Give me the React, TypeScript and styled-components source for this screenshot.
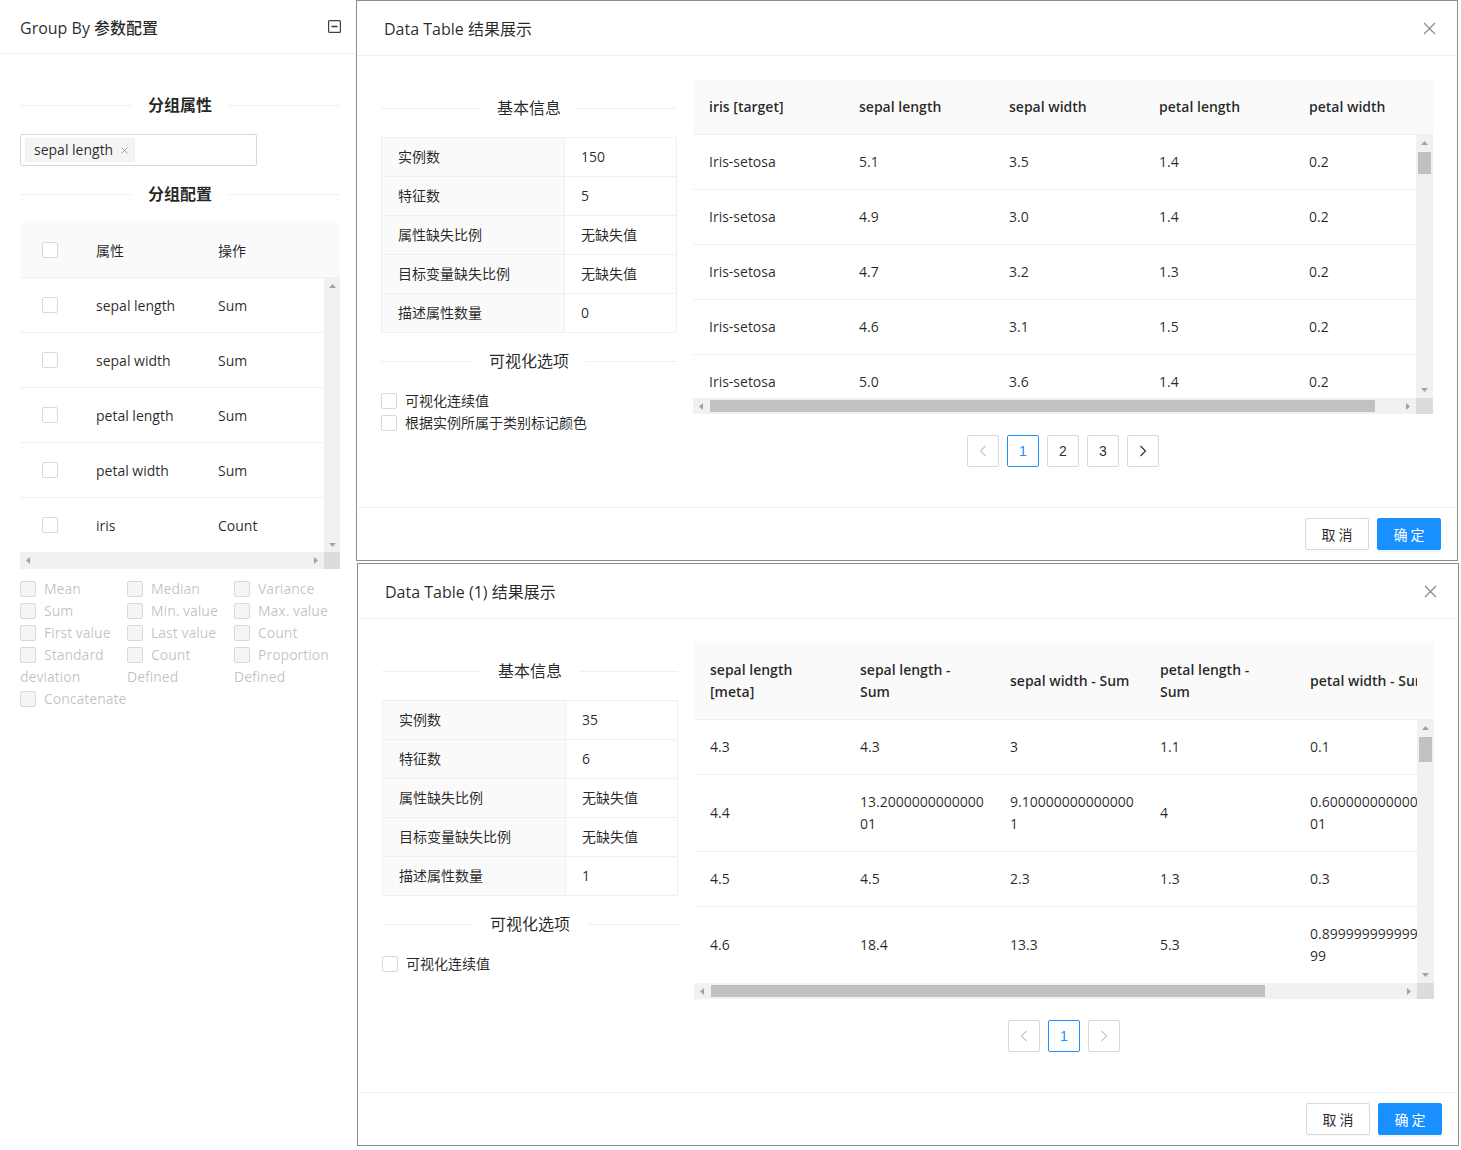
import React from 'react';
import styled, { createGlobalStyle } from 'styled-components';

type ArrowDir = 'up' | 'down' | 'left' | 'right';

const leftColumns = ['sepal length', 'sepal width', 'petal length', 'petal width', 'iris'];
const leftOps = ['Sum', 'Sum', 'Sum', 'Sum', 'Count'];

const aggOptions = [
  'Mean',
  'Median',
  'Variance',
  'Sum',
  'Min. value',
  'Max. value',
  'First value',
  'Last value',
  'Count',
  'Standard deviation',
  'Count Defined',
  'Proportion Defined',
  'Concatenate',
];

const firstResult = {
  title: 'Data Table 结果展示',
  info: [
    ['实例数', '150'],
    ['特征数', '5'],
    ['属性缺失比例', '无缺失值'],
    ['目标变量缺失比例', '无缺失值'],
    ['描述属性数量', '0'],
  ],
  visOptions: ['可视化连续值', '根据实例所属于类别标记颜色'],
  columns: ['iris [target]', 'sepal length', 'sepal width', 'petal length', 'petal width'],
  rows: [
    ['Iris-setosa', '5.1', '3.5', '1.4', '0.2'],
    ['Iris-setosa', '4.9', '3.0', '1.4', '0.2'],
    ['Iris-setosa', '4.7', '3.2', '1.3', '0.2'],
    ['Iris-setosa', '4.6', '3.1', '1.5', '0.2'],
    ['Iris-setosa', '5.0', '3.6', '1.4', '0.2'],
  ],
  pages: 3,
  hThumb: 96.5,
  vThumb: 22,
};

const secondResult = {
  title: 'Data Table (1) 结果展示',
  info: [
    ['实例数', '35'],
    ['特征数', '6'],
    ['属性缺失比例', '无缺失值'],
    ['目标变量缺失比例', '无缺失值'],
    ['描述属性数量', '1'],
  ],
  visOptions: ['可视化连续值'],
  columns: [
    'sepal length\n[meta]',
    'sepal length -\nSum',
    'sepal width - Sum',
    'petal length -\nSum',
    'petal width - Sum',
  ],
  rows: [
    ['4.3', '4.3', '3', '1.1', '0.1'],
    ['4.4', '13.2000000000000\n01', '9.10000000000000\n1', '4', '0.60000000000000\n01'],
    ['4.5', '4.5', '2.3', '1.3', '0.3'],
    ['4.6', '18.4', '13.3', '5.3', '0.89999999999999\n99'],
  ],
  pages: 1,
  hThumb: 80.4,
  vThumb: 25,
};

const GlobalStyle = createGlobalStyle`
  html, body {
    margin: 0;
    padding: 0;
    background: #ffffff;
  }
  body {
    font-family: 'Open Sans', 'Noto Sans CJK SC', sans-serif;
    font-size: 14px;
    color: rgba(0, 0, 0, 0.85);
  }
  * {
    box-sizing: border-box;
  }
`;

const Arrow: React.FC<{ dir: ArrowDir; color?: string }> = ({ dir, color = '#a3a3a3' }) => (
  <svg width="7" height="7" viewBox="0 0 7 7">
    {dir === 'up' && <path d="M0 5 L3.5 1 L7 5 Z" fill={color} />}
    {dir === 'down' && <path d="M0 2 L3.5 6 L7 2 Z" fill={color} />}
    {dir === 'left' && <path d="M5 0 L1 3.5 L5 7 Z" fill={color} />}
    {dir === 'right' && <path d="M2 0 L6 3.5 L2 7 Z" fill={color} />}
  </svg>
);

const Chevron: React.FC<{ dir: 'left' | 'right'; color: string }> = ({ dir, color }) => (
  <svg width="8" height="12" viewBox="0 0 8 12">
    <path
      d={dir === 'left' ? 'M6.5 1 L1.5 6 L6.5 11' : 'M1.5 1 L6.5 6 L1.5 11'}
      fill="none"
      stroke={color}
      strokeWidth="1.2"
    />
  </svg>
);

const CloseIcon: React.FC = () => (
  <svg width="13" height="13" viewBox="0 0 13 13">
    <path d="M1 1 L12 12 M12 1 L1 12" stroke="#8c8c8c" strokeWidth="1.3" fill="none" />
  </svg>
);

const CollapseIcon: React.FC = () => (
  <svg width="13" height="13" viewBox="0 0 13 13">
    <rect x="0.6" y="0.6" width="11.8" height="11.8" rx="1" fill="none" stroke="#404040" strokeWidth="1.2" />
    <path d="M3.5 6.5 H9.5" stroke="#404040" strokeWidth="1.6" />
  </svg>
);

const TagClose: React.FC = () => (
  <svg width="7" height="7" viewBox="0 0 7 7">
    <path d="M0.5 0.5 L6.5 6.5 M6.5 0.5 L0.5 6.5" stroke="#9a9a9a" strokeWidth="1" fill="none" />
  </svg>
);

const VScrollBar: React.FC<{ width: number; thumb?: number }> = ({ width, thumb }) => (
  <VTrack $w={width}>
    <ArrowBox $size={width}>
      <Arrow dir="up" />
    </ArrowBox>
    {thumb ? <VThumb $h={thumb} /> : null}
    <Spacer />
    <ArrowBox $size={width}>
      <Arrow dir="down" />
    </ArrowBox>
  </VTrack>
);

const HScrollBar: React.FC<{ height: number; corner: number; thumb?: number }> = ({
  height,
  corner,
  thumb,
}) => (
  <HBar $h={height}>
    <HTrack>
      <ArrowBox $size={17}>
        <Arrow dir="left" />
      </ArrowBox>
      <ThumbLane>{thumb ? <HThumb style={{ width: `${thumb}%` }} /> : null}</ThumbLane>
      <ArrowBox $size={17}>
        <Arrow dir="right" />
      </ArrowBox>
    </HTrack>
    <Corner $w={corner} />
  </HBar>
);

const Divider: React.FC<{ bold?: boolean; children: React.ReactNode }> = ({ bold, children }) => (
  <DividerLine $bold={bold}>
    <DividerText>{children}</DividerText>
  </DividerLine>
);

const GroupByPanel: React.FC = () => (
  <LeftPanel>
    <PanelHeader>
      <PanelTitle>Group By 参数配置</PanelTitle>
      <CollapseIcon />
    </PanelHeader>
    <PanelBody>
      <Divider bold>分组属性</Divider>
      <SelectBox>
        <Tag>
          sepal length
          <TagClose />
        </Tag>
      </SelectBox>
      <Divider bold>分组配置</Divider>
      <LeftHead>
        <CenterCell>
          <Box />
        </CenterCell>
        <LeftCell>属性</LeftCell>
        <LeftCell>操作</LeftCell>
      </LeftHead>
      <ScrollBody>
        <LeftRowsClip>
          {leftColumns.map((name, i) => (
            <LeftRow key={name}>
              <CenterCell>
                <Box />
              </CenterCell>
              <LeftCell>{name}</LeftCell>
              <LeftCell>{leftOps[i]}</LeftCell>
            </LeftRow>
          ))}
        </LeftRowsClip>
        <VScrollBar width={16} />
      </ScrollBody>
      <HScrollBar height={17} corner={16} />
      <OptionGrid>
        {aggOptions.map((opt) => (
          <OptionItem key={opt}>
            <Box $disabled />
            {opt}
          </OptionItem>
        ))}
      </OptionGrid>
    </PanelBody>
  </LeftPanel>
);

type ResultData = typeof firstResult;

const DataTable: React.FC<{ data: ResultData }> = ({ data }) => (
  <div>
    <HeadRow>
      <HeadClip>
        <Grid5>
          {data.columns.map((c) => (
            <HeadCell key={c}>{c}</HeadCell>
          ))}
        </Grid5>
      </HeadClip>
      <Gutter />
    </HeadRow>
    <ScrollBody>
      <RowsClip>
        {data.rows.map((row, i) => (
          <DataRow key={i}>
            {row.map((cell, j) => (
              <DataCell key={j}>{cell}</DataCell>
            ))}
          </DataRow>
        ))}
      </RowsClip>
      <VScrollBar width={17} thumb={data.vThumb} />
    </ScrollBody>
    <HScrollBar height={16} corner={17} thumb={data.hThumb} />
  </div>
);

const Pagination: React.FC<{ pages: number }> = ({ pages }) => (
  <PagerRow>
    <PageItem>
      <Chevron dir="left" color="#c8c8c8" />
    </PageItem>
    {Array.from({ length: pages }, (_, i) => (
      <PageItem key={i} $active={i === 0}>
        {i + 1}
      </PageItem>
    ))}
    <PageItem>
      <Chevron dir="right" color={pages > 1 ? '#333333' : '#c8c8c8'} />
    </PageItem>
  </PagerRow>
);

const ResultModal: React.FC<{ data: ResultData; shift?: number }> = ({ data, shift = 0 }) => (
  <Modal $shift={shift}>
    <ModalHeader>
      <ModalTitle>{data.title}</ModalTitle>
      <CloseIcon />
    </ModalHeader>
    <ModalBody>
      <InfoColumn>
        <Divider>基本信息</Divider>
        <InfoTable>
          {data.info.map(([label, value]) => (
            <InfoRow key={label}>
              <InfoLabel>{label}</InfoLabel>
              <InfoValue>{value}</InfoValue>
            </InfoRow>
          ))}
        </InfoTable>
        <Divider>可视化选项</Divider>
        <VisList>
          {data.visOptions.map((opt) => (
            <VisOption key={opt}>
              <Box />
              {opt}
            </VisOption>
          ))}
        </VisList>
      </InfoColumn>
      <TableColumn>
        <DataTable data={data} />
        <Pagination pages={data.pages} />
      </TableColumn>
    </ModalBody>
    <ModalFooter>
      <Button>取 消</Button>
      <Button $primary>确 定</Button>
    </ModalFooter>
  </Modal>
);

const App: React.FC = () => (
  <Page>
    <GlobalStyle />
    <GroupByPanel />
    <ModalStack>
      <ResultModal data={firstResult} />
      <ResultModal data={secondResult} shift={1} />
    </ModalStack>
  </Page>
);

const Page = styled.div`
  display: flex;
  align-items: flex-start;
  width: 1461px;
`;

const LeftPanel = styled.div`
  width: 356px;
  flex: none;
`;

const PanelHeader = styled.div`
  height: 54px;
  display: flex;
  align-items: center;
  justify-content: space-between;
  padding: 0 15px 0 20px;
  border-bottom: 1px solid #f0f0f0;
`;

const PanelTitle = styled.div`
  font-size: 16px;
  font-weight: 500;
  color: rgba(0, 0, 0, 0.85);
`;

const PanelBody = styled.div`
  display: flex;
  flex-direction: column;
  padding: 23px 16px 0 20px;
`;

const DividerLine = styled.div<{ $bold?: boolean }>`
  display: flex;
  align-items: center;
  margin: 16px 0;
  font-size: 16px;
  line-height: 24px;
  font-weight: ${({ $bold }) => ($bold ? 700 : 400)};
  color: rgba(0, 0, 0, 0.85);

  &::before,
  &::after {
    content: '';
    flex: 1;
    border-top: 1px solid #f0f0f0;
  }
`;

const DividerText = styled.span`
  padding: 0 17px;
  white-space: nowrap;
`;

const SelectBox = styled.div`
  width: 237px;
  height: 32px;
  margin-top: 1px;
  border: 1px solid #d9d9d9;
  border-radius: 2px;
  padding: 3px 4px;
  display: flex;
  align-items: center;
`;

const Tag = styled.span`
  display: inline-flex;
  align-items: center;
  gap: 8px;
  height: 24px;
  padding: 0 6px 0 8px;
  background: #f5f5f5;
  border: 1px solid #f0f0f0;
  border-radius: 2px;
  line-height: 22px;
`;

const LeftHead = styled.div`
  display: grid;
  grid-template-columns: 60px 122px 1fr;
  height: 55px;
  flex: none;
  margin-top: 1px;
  align-items: center;
  background: #fafafa;
  border-bottom: 1px solid #f0f0f0;
`;

const LeftRow = styled(LeftHead)`
  margin-top: 0;
  background: #ffffff;
`;

const CenterCell = styled.div`
  display: flex;
  justify-content: center;
`;

const LeftCell = styled.div`
  padding: 0 16px;
  white-space: nowrap;
`;

const ScrollBody = styled.div`
  display: flex;
`;

const LeftRowsClip = styled.div`
  flex: 1;
  height: 274px;
  overflow: hidden;
`;

const Box = styled.span<{ $disabled?: boolean }>`
  display: inline-block;
  width: 16px;
  height: 16px;
  margin-right: 8px;
  border: 1px solid #d9d9d9;
  border-radius: 2px;
  background: ${({ $disabled }) => ($disabled ? '#f5f5f5' : '#ffffff')};
  vertical-align: -3px;
  flex: none;

  ${CenterCell} & {
    margin-right: 0;
  }
`;

const OptionGrid = styled.div`
  display: grid;
  grid-template-columns: repeat(3, 107px);
  margin-top: 9px;
  line-height: 22px;
  color: rgba(0, 0, 0, 0.25);
`;

const OptionItem = styled.label`
  display: block;
  cursor: not-allowed;
`;

const VTrack = styled.div<{ $w: number }>`
  width: ${({ $w }) => $w}px;
  flex: none;
  display: flex;
  flex-direction: column;
  align-items: center;
  background: #f1f1f1;
`;

const ArrowBox = styled.div<{ $size: number }>`
  width: ${({ $size }) => $size}px;
  height: ${({ $size }) => $size}px;
  flex: none;
  display: flex;
  align-items: center;
  justify-content: center;
`;

const VThumb = styled.div<{ $h: number }>`
  width: 13px;
  height: ${({ $h }) => $h}px;
  background: #c1c1c1;
`;

const Spacer = styled.div`
  flex: 1;
`;

const HBar = styled.div<{ $h: number }>`
  display: flex;
  height: ${({ $h }) => $h}px;
`;

const HTrack = styled.div`
  flex: 1;
  min-width: 0;
  display: flex;
  align-items: center;
  background: #f1f1f1;
  overflow: hidden;
`;

const ThumbLane = styled.div`
  flex: 1;
  display: flex;
  align-items: center;
`;

const HThumb = styled.div`
  height: 12px;
  background: #c1c1c1;
`;

const Corner = styled.div<{ $w: number }>`
  width: ${({ $w }) => $w}px;
  flex: none;
  background: #dcdcdc;
`;

const ModalStack = styled.div`
  display: flex;
  flex-direction: column;
  gap: 2px;
`;

const Modal = styled.div<{ $shift: number }>`
  width: 1102px;
  margin-left: ${({ $shift }) => $shift}px;
  background: #ffffff;
  border: 1px solid #8c8c8c;
`;

const ModalHeader = styled.div`
  height: 55px;
  display: flex;
  align-items: center;
  justify-content: space-between;
  padding: 0 21px 0 27px;
  border-bottom: 1px solid #f0f0f0;
`;

const ModalTitle = styled.div`
  font-size: 16px;
  color: rgba(0, 0, 0, 0.85);
`;

const ModalBody = styled.div`
  display: grid;
  grid-template-columns: 296px minmax(0, 1fr);
  column-gap: 16px;
  align-items: start;
  padding: 24px;
`;

const InfoColumn = styled.div`
  display: flex;
  flex-direction: column;
`;

const TableColumn = styled.div`
  min-width: 0;
`;

const InfoTable = styled.div`
  margin-top: 1px;
  border: 1px solid #f0f0f0;
`;

const InfoRow = styled.div`
  display: grid;
  grid-template-columns: 183px 1fr;
  line-height: 22px;

  & + & {
    border-top: 1px solid #f0f0f0;
  }
`;

const InfoLabel = styled.div`
  padding: 8px 16px;
  background: #fafafa;
  border-right: 1px solid #f0f0f0;
`;

const InfoValue = styled.div`
  padding: 8px 16px;
`;

const VisList = styled.div`
  padding-top: 1px;
`;

const VisOption = styled.label`
  display: block;
  line-height: 22px;
`;

const HeadRow = styled.div`
  display: flex;
  background: #fafafa;
  border-bottom: 1px solid #f0f0f0;
`;

const HeadClip = styled.div`
  flex: 1;
  min-width: 0;
  overflow: hidden;
`;

const Gutter = styled.div`
  width: 17px;
  flex: none;
`;

const Grid5 = styled.div`
  display: grid;
  grid-template-columns: repeat(5, 150px);
  align-items: center;
`;

const HeadCell = styled.div`
  padding: 16px;
  line-height: 22px;
  font-weight: 600;
  white-space: pre;
`;

const RowsClip = styled.div`
  flex: 1;
  min-width: 0;
  height: 263px;
  overflow: hidden;
`;

const DataRow = styled(Grid5)`
  border-bottom: 1px solid #f0f0f0;
`;

const DataCell = styled.div`
  padding: 16px;
  line-height: 22px;
  white-space: pre;
`;

const PagerRow = styled.div`
  display: flex;
  justify-content: center;
  gap: 8px;
  margin: 21px 0 16px;
`;

const PageItem = styled.div<{ $active?: boolean }>`
  width: 32px;
  height: 32px;
  display: flex;
  align-items: center;
  justify-content: center;
  border: 1px solid ${({ $active }) => ($active ? '#1890ff' : '#d9d9d9')};
  border-radius: 2px;
  color: ${({ $active }) => ($active ? '#1890ff' : 'rgba(0, 0, 0, 0.85)')};
  font-family: 'Liberation Sans', sans-serif;
  font-size: 14px;
`;

const ModalFooter = styled.div`
  display: flex;
  justify-content: flex-end;
  gap: 8px;
  padding: 10px 16px;
  border-top: 1px solid #f0f0f0;
`;

const Button = styled.button<{ $primary?: boolean }>`
  width: 64px;
  height: 32px;
  padding: 0;
  border-radius: 2px;
  font-family: 'Noto Sans CJK SC', sans-serif;
  font-size: 14px;
  border: 1px solid ${({ $primary }) => ($primary ? '#1890ff' : '#d9d9d9')};
  background: ${({ $primary }) => ($primary ? '#1890ff' : '#ffffff')};
  color: ${({ $primary }) => ($primary ? '#ffffff' : 'rgba(0, 0, 0, 0.85)')};
  box-shadow: ${({ $primary }) => ($primary ? '0 2px 0 rgba(0, 0, 0, 0.045)' : '0 2px 0 rgba(0, 0, 0, 0.015)')};
`;

export default App;
